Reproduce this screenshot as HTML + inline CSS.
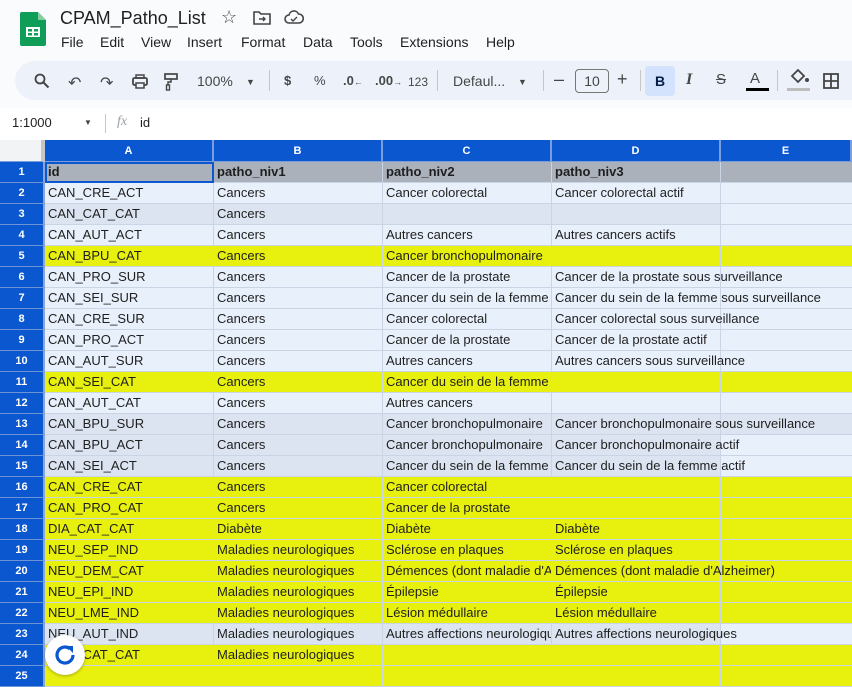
<!DOCTYPE html>
<html><head><meta charset="utf-8"><style>
*{box-sizing:border-box;margin:0;padding:0}
body{width:852px;height:672px;overflow:hidden;background:#f9fbfd;font-family:"Liberation Sans",Arial,sans-serif;position:relative;color:#1f1f1f}
.abs{position:absolute}
.menu span{margin-right:0;position:absolute;top:0;font-size:14px;color:#1f1f1f}
.tb{position:absolute;left:15px;top:61px;width:860px;height:39px;background:#edf2fa;border-radius:20px}
.ti{position:absolute;top:73px;font-size:13px;color:#444746}
.grid{position:absolute;left:0;top:140px;width:852px}
.row{display:flex;height:21px}
.c{height:21px;border-right:1px solid #c9d4e4;border-bottom:1px solid #c9d4e4;font-size:13px;line-height:20px;padding-left:3px;white-space:nowrap;overflow:hidden;position:relative}
.ov{overflow:visible;z-index:2}
.rh{width:45px;background:#0b57d0;color:#fff;font-weight:bold;font-size:11px;text-align:center;padding:0;border-right:2px solid #8aa6d8;border-bottom:1px solid #6f94d6}
.a{width:169px}.b{width:169px}.cc{width:169px}.d{width:169px}.e{width:131px;border-right:none}
.L{background:#e8f0fb}.D{background:#dbe4f0}.Y{background:#e8f00e}
.hdr .c{background:#0b57d0;color:#fff;font-weight:bold;font-size:11px;text-align:center;padding:0;height:22px;line-height:22px;border-right:2px solid #7a9edb;border-bottom:1px solid #7a9edb}
.hdr{height:22px}
.hdr .rh{background:#f1f3f5;border-right:4px solid #c4c7c5}
.r1 .c{background:#aab1bb;font-weight:bold}
.r1 .rh{background:#0b57d0}
</style></head><body>
<svg class="abs" style="left:20px;top:12px" width="26" height="34" viewBox="0 0 26 34"><path d="M2 0h16l8 8v24a2 2 0 0 1-2 2H2a2 2 0 0 1-2-2V2a2 2 0 0 1 2-2z" fill="#0f9d58"/><path d="M18 0v8h8z" fill="#87ce9e"/><rect x="6" y="15" width="14" height="10" fill="#fff"/><rect x="8" y="17" width="4" height="2.5" fill="#0f9d58"/><rect x="14" y="17" width="4" height="2.5" fill="#0f9d58"/><rect x="8" y="21" width="4" height="2.5" fill="#0f9d58"/><rect x="14" y="21" width="4" height="2.5" fill="#0f9d58"/></svg>
<div class="abs" style="left:60px;top:8px;font-size:18px;color:#1f1f1f">CPAM_Patho_List</div>
<div class="abs" style="left:221px;top:7px;font-size:18px;color:#444">☆</div>
<svg class="abs" style="left:253px;top:10px" width="18" height="15" viewBox="0 0 18 15"><path d="M1 2h5l2 2h9v10H1z" fill="none" stroke="#444" stroke-width="1.6"/><path d="M6 9h6M10 7l2 2-2 2" fill="none" stroke="#444" stroke-width="1.4"/></svg>
<svg class="abs" style="left:284px;top:10px" width="20" height="14" viewBox="0 0 20 14"><path d="M5 13a4 4 0 0 1 0-8 5 5 0 0 1 9.5-1A4.5 4.5 0 0 1 15 13z" fill="none" stroke="#444" stroke-width="1.6"/><path d="M7 9l2 2 4-4" fill="none" stroke="#444" stroke-width="1.4"/></svg>
<div class="menu abs" style="left:0;top:34px;width:600px;height:20px">
<span style="left:61px">File</span><span style="left:100px">Edit</span><span style="left:141px">View</span><span style="left:187px">Insert</span><span style="left:241px">Format</span><span style="left:303px">Data</span><span style="left:350px">Tools</span><span style="left:400px">Extensions</span><span style="left:486px">Help</span></div>
<div class="tb"></div>
<svg class="abs" style="left:34px;top:73px" width="16" height="16" viewBox="0 0 16 16"><circle cx="6" cy="6" r="4.5" fill="none" stroke="#444" stroke-width="1.8"/><path d="M9.5 9.5l5 5" stroke="#444" stroke-width="2"/></svg>
<div class="ti" style="left:68px;font-size:16px">↶</div>
<div class="ti" style="left:100px;font-size:16px">↷</div>
<svg class="abs" style="left:132px;top:74px" width="16" height="15" viewBox="0 0 16 15"><rect x="1" y="4" width="14" height="7" rx="1.5" fill="none" stroke="#444" stroke-width="1.8"/><rect x="4" y="1" width="8" height="3" fill="none" stroke="#444" stroke-width="1.5"/><rect x="4" y="9" width="8" height="5" fill="#edf2fa" stroke="#444" stroke-width="1.5"/></svg>
<svg class="abs" style="left:164px;top:73px" width="14" height="18" viewBox="0 0 14 18"><rect x="1" y="1" width="12" height="5" fill="none" stroke="#444" stroke-width="1.7"/><path d="M7 6v3H4v3" fill="none" stroke="#444" stroke-width="1.5"/><rect x="2.5" y="12" width="3" height="5" fill="none" stroke="#444" stroke-width="1.4"/></svg>
<div class="ti" style="left:197px;font-size:14px;top:73px">100%</div>
<div class="ti" style="left:246px;font-size:9px;top:77px">▼</div>
<div class="abs" style="left:269px;top:70px;width:1px;height:21px;background:#c4c7c5"></div>
<div class="ti" style="left:284px;font-weight:bold">$</div>
<div class="ti" style="left:314px">%</div>
<div class="ti" style="left:343px;font-weight:bold">.0<span style="font-size:9px">←</span></div>
<div class="ti" style="left:375px;font-weight:bold">.00<span style="font-size:9px">→</span></div>
<div class="ti" style="left:408px;font-size:12px;top:75px">123</div>
<div class="abs" style="left:437px;top:70px;width:1px;height:21px;background:#c4c7c5"></div>
<div class="ti" style="left:453px;font-size:14px">Defaul...</div>
<div class="ti" style="left:518px;font-size:9px;top:77px">▼</div>
<div class="abs" style="left:543px;top:70px;width:1px;height:21px;background:#c4c7c5"></div>
<div class="ti" style="left:554px;font-size:18px;top:69px">–</div>
<div class="abs" style="left:575px;top:69px;width:34px;height:24px;border:1px solid #747775;border-radius:4px;font-size:14px;text-align:center;line-height:22px;color:#444">10</div>
<div class="ti" style="left:617px;font-size:18px;top:69px">+</div>
<div class="abs" style="left:640px;top:70px;width:1px;height:21px;background:#c4c7c5"></div>
<div class="abs" style="left:645px;top:66px;width:30px;height:30px;background:#d3e3fd;border-radius:4px;text-align:center;line-height:30px;font-weight:bold;font-size:14px;color:#041e49">B</div>
<div class="ti" style="left:686px;font-size:16px;font-style:italic;top:71px;font-family:'Liberation Serif',serif;font-weight:bold">I</div>
<div class="ti" style="left:716px;font-size:15px;top:71px;text-decoration:line-through">S</div>
<div class="ti" style="left:750px;font-size:15px;top:70px">A</div>
<div class="abs" style="left:746px;top:88px;width:23px;height:3px;background:#000"></div>
<div class="abs" style="left:777px;top:70px;width:1px;height:21px;background:#c4c7c5"></div>
<svg class="abs" style="left:788px;top:69px" width="22" height="16" viewBox="0 0 22 16"><path d="M4 7l6-6 6 6-6 6z" fill="none" stroke="#444" stroke-width="1.8"/><circle cx="19" cy="11" r="2" fill="#444"/></svg>
<div class="abs" style="left:787px;top:88px;width:23px;height:3px;background:#bdbdbd"></div>
<svg class="abs" style="left:823px;top:73px" width="16" height="16" viewBox="0 0 16 16"><rect x="1" y="1" width="14" height="14" fill="none" stroke="#444" stroke-width="1.8"/><path d="M8 1v14M1 8h14" stroke="#444" stroke-width="1.8"/></svg>
<div class="abs" style="left:0;top:108px;width:852px;height:32px;background:#fff"></div>
<div class="abs" style="left:12px;top:115px;font-size:13px">1:1000</div>
<div class="abs" style="left:84px;top:118px;font-size:8px;color:#444">▼</div>
<div class="abs" style="left:105px;top:114px;width:1px;height:19px;background:#c4c7c5"></div>
<div class="abs" style="left:117px;top:114px;font-size:14px;font-style:italic;color:#9aa0a6;font-family:'Liberation Serif',serif">fx</div>
<div class="abs" style="left:140px;top:115px;font-size:13px">id</div>
<div class="grid">
<div class="row hdr"><div class="c rh"></div><div class="c a">A</div><div class="c b">B</div><div class="c cc">C</div><div class="c d">D</div><div class="c e">E</div></div>
<div class="row r1"><div class="c rh">1</div><div class="c a" style="outline:2px solid #0b57d0;outline-offset:-2px">id</div><div class="c b">patho_niv1</div><div class="c cc">patho_niv2</div><div class="c d">patho_niv3</div><div class="c e L"></div></div>
<div class="row L"><div class="c rh">2</div><div class="c a">CAN_CRE_ACT</div><div class="c b">Cancers</div><div class="c cc">Cancer colorectal</div><div class="c d">Cancer colorectal actif</div><div class="c e"></div></div>
<div class="row D"><div class="c rh">3</div><div class="c a">CAN_CAT_CAT</div><div class="c b">Cancers</div><div class="c cc"></div><div class="c d"></div><div class="c e L"></div></div>
<div class="row L"><div class="c rh">4</div><div class="c a">CAN_AUT_ACT</div><div class="c b">Cancers</div><div class="c cc">Autres cancers</div><div class="c d">Autres cancers actifs</div><div class="c e"></div></div>
<div class="row Y"><div class="c rh">5</div><div class="c a">CAN_BPU_CAT</div><div class="c b">Cancers</div><div class="c cc ov">Cancer bronchopulmonaire</div><div class="c d"></div><div class="c e"></div></div>
<div class="row L"><div class="c rh">6</div><div class="c a">CAN_PRO_SUR</div><div class="c b">Cancers</div><div class="c cc">Cancer de la prostate</div><div class="c d ov">Cancer de la prostate sous surveillance</div><div class="c e"></div></div>
<div class="row L"><div class="c rh">7</div><div class="c a">CAN_SEI_SUR</div><div class="c b">Cancers</div><div class="c cc">Cancer du sein de la femme</div><div class="c d ov">Cancer du sein de la femme sous surveillance</div><div class="c e"></div></div>
<div class="row L"><div class="c rh">8</div><div class="c a">CAN_CRE_SUR</div><div class="c b">Cancers</div><div class="c cc">Cancer colorectal</div><div class="c d ov">Cancer colorectal sous surveillance</div><div class="c e"></div></div>
<div class="row L"><div class="c rh">9</div><div class="c a">CAN_PRO_ACT</div><div class="c b">Cancers</div><div class="c cc">Cancer de la prostate</div><div class="c d">Cancer de la prostate actif</div><div class="c e"></div></div>
<div class="row L"><div class="c rh">10</div><div class="c a">CAN_AUT_SUR</div><div class="c b">Cancers</div><div class="c cc">Autres cancers</div><div class="c d ov">Autres cancers sous surveillance</div><div class="c e"></div></div>
<div class="row Y"><div class="c rh">11</div><div class="c a">CAN_SEI_CAT</div><div class="c b">Cancers</div><div class="c cc ov">Cancer du sein de la femme</div><div class="c d"></div><div class="c e"></div></div>
<div class="row L"><div class="c rh">12</div><div class="c a">CAN_AUT_CAT</div><div class="c b">Cancers</div><div class="c cc">Autres cancers</div><div class="c d"></div><div class="c e"></div></div>
<div class="row D"><div class="c rh">13</div><div class="c a">CAN_BPU_SUR</div><div class="c b">Cancers</div><div class="c cc">Cancer bronchopulmonaire</div><div class="c d ov">Cancer bronchopulmonaire sous surveillance</div><div class="c e"></div></div>
<div class="row D"><div class="c rh">14</div><div class="c a">CAN_BPU_ACT</div><div class="c b">Cancers</div><div class="c cc">Cancer bronchopulmonaire</div><div class="c d ov">Cancer bronchopulmonaire actif</div><div class="c e L"></div></div>
<div class="row D"><div class="c rh">15</div><div class="c a">CAN_SEI_ACT</div><div class="c b">Cancers</div><div class="c cc">Cancer du sein de la femme</div><div class="c d ov">Cancer du sein de la femme actif</div><div class="c e L"></div></div>
<div class="row Y"><div class="c rh">16</div><div class="c a">CAN_CRE_CAT</div><div class="c b">Cancers</div><div class="c cc">Cancer colorectal</div><div class="c d"></div><div class="c e"></div></div>
<div class="row Y"><div class="c rh">17</div><div class="c a">CAN_PRO_CAT</div><div class="c b">Cancers</div><div class="c cc">Cancer de la prostate</div><div class="c d"></div><div class="c e"></div></div>
<div class="row Y"><div class="c rh">18</div><div class="c a">DIA_CAT_CAT</div><div class="c b">Diabète</div><div class="c cc">Diabète</div><div class="c d">Diabète</div><div class="c e"></div></div>
<div class="row Y"><div class="c rh">19</div><div class="c a">NEU_SEP_IND</div><div class="c b">Maladies neurologiques</div><div class="c cc">Sclérose en plaques</div><div class="c d">Sclérose en plaques</div><div class="c e"></div></div>
<div class="row Y"><div class="c rh">20</div><div class="c a">NEU_DEM_CAT</div><div class="c b">Maladies neurologiques</div><div class="c cc">Démences (dont maladie d'Alzheimer)</div><div class="c d ov">Démences (dont maladie d'Alzheimer)</div><div class="c e"></div></div>
<div class="row Y"><div class="c rh">21</div><div class="c a">NEU_EPI_IND</div><div class="c b">Maladies neurologiques</div><div class="c cc">Épilepsie</div><div class="c d">Épilepsie</div><div class="c e"></div></div>
<div class="row Y"><div class="c rh">22</div><div class="c a">NEU_LME_IND</div><div class="c b">Maladies neurologiques</div><div class="c cc">Lésion médullaire</div><div class="c d">Lésion médullaire</div><div class="c e"></div></div>
<div class="row D"><div class="c rh">23</div><div class="c a">NEU_AUT_IND</div><div class="c b">Maladies neurologiques</div><div class="c cc">Autres affections neurologiques</div><div class="c d ov">Autres affections neurologiques</div><div class="c e L"></div></div>
<div class="row Y"><div class="c rh">24</div><div class="c a">NEU_CAT_CAT</div><div class="c b">Maladies neurologiques</div><div class="c cc"></div><div class="c d"></div><div class="c e"></div></div>
<div class="row Y"><div class="c rh">25</div><div class="c a"></div><div class="c b"></div><div class="c cc"></div><div class="c d"></div><div class="c e"></div></div>
</div>
<div class="abs" style="left:45px;top:635px;width:40px;height:40px;border-radius:50%;background:#fff;box-shadow:0 1px 3px rgba(0,0,0,.3);z-index:5"></div>
<svg class="abs" style="left:52px;top:642px;z-index:6" width="26" height="26" viewBox="0 0 26 26"><path d="M21 13a8 8 0 1 1-3-6.2" fill="none" stroke="#0b57d0" stroke-width="3.2"/><path d="M14 4h7v7z" fill="#0b57d0"/></svg>
</body></html>
